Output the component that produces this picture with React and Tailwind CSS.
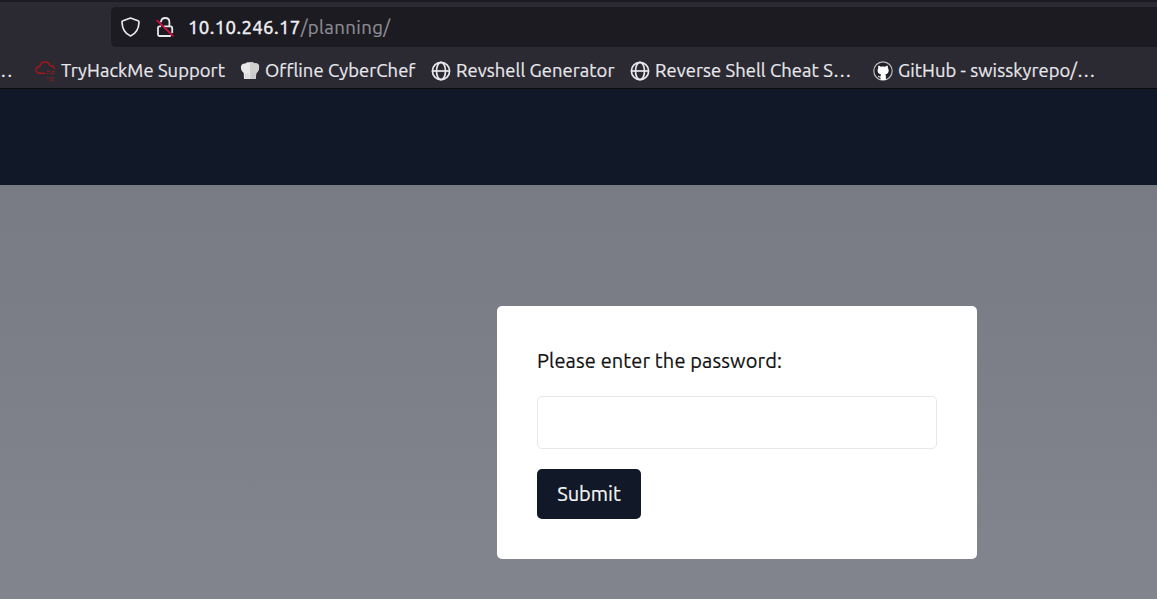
function GlobeIcon() {
  return (
    <svg className="size-5 shrink-0" viewBox="0 0 20 20" fill="none" stroke="#e8e8ec" strokeWidth="1.700">
      <circle cx="10" cy="10" r="8.600" />
      <ellipse cx="10" cy="10" rx="4.500" ry="8.600" />
      <path d="M1.300 10h17.400" />
    </svg>
  );
}

function CloudIcon() {
  return (
    <svg className="h-5 w-[21px] shrink-0" viewBox="0 0 21 20" fill="none" stroke="#a3161c" strokeWidth="1.500">
      <path d="M10 12.200H5.200C2.600 12.200 1 10.800 1 8.800 1 6.800 2.700 5.600 4.900 5.600 5.300 2.800 7.400 1.100 10 1.100c2.400 0 4.200 1.300 4.800 3.500 2.700-.1 4.300 1.200 4.500 3.400" />
      <path d="M12 10.300h3M17 10.300h2.700M11.500 12.300h2M15 12.300h4.500M11.500 16.800h2.500M15.500 16.800h3M14.500 19.200h4.500" strokeWidth="1.300" opacity=".75" />
    </svg>
  );
}

function ChefIcon() {
  return (
    <svg className="size-5 shrink-0" viewBox="0 0 20 20">
      <path d="M4 18 3.700 12C1.600 10.500 .6 8 1 5.500 1.300 3.200 3 2.200 5.300 2.400 6.500 1.200 8.500 1 10 1.300c1.600-.3 3.500 0 4.700 1.100C17 2 19 3.200 19.100 5.500c.2 2.500-.8 5-2.800 6.500L15.700 18Z" fill="#e9e9e9" />
      <path d="M10 1.300c1.600-.3 3.500 0 4.700 1.100C17 2 19 3.200 19.100 5.500c.2 2.500-.8 5-2.800 6.500L15.700 18H10Z" fill="#cfcfcf" />
      <path d="M5.800 12.500v5M8 12.500v5M12.300 12.500v5M14.300 12.500v5" stroke="#bdbdbd" strokeWidth=".6" />
    </svg>
  );
}

function GitHubIcon() {
  return (
    <svg className="size-5 shrink-0" viewBox="0 0 20 20">
      <circle cx="10" cy="10" r="9.200" fill="#202027" stroke="#b9b9be" strokeWidth="1.200" />
      <path d="M5.300 4.800c1 0 2 .5 2.700 1 1.300-.3 2.700-.3 4 0 .7-.5 1.700-1 2.700-1 .3.800.3 1.500.1 2.200.6.700.9 1.500.9 2.400 0 2.500-1.500 3.600-3.400 3.900.4.400.6 1 .6 1.600V19H7.500v-2.600c-1.600.2-2.400-.5-2.700-1.600l1 .1c.5.500 1 .6 1.700.5 0-.8.200-1.500.6-2-1.900-.3-3.500-1.400-3.500-4 0-.9.300-1.700.7-2.400-.2-.7-.2-1.400 0-2.200Z" fill="#fff" />
    </svg>
  );
}

function ShieldIcon() {
  return (
    <svg className="h-5 w-[19px] shrink-0" viewBox="0 0 19 20" fill="none" stroke="#e8e8ec" strokeWidth="1.700" strokeLinejoin="round">
      <path d="M9.500 1 17 3.700c.7.300 1.100.8 1 1.500-.2 6.300-3 11.300-8.500 13.800C4 16.500 1.200 11.500 1 5.200.9 4.500 1.300 4 2 3.700Z" />
    </svg>
  );
}

function InsecureLockIcon() {
  return (
    <svg className="h-5 w-[18px] shrink-0" viewBox="0 0 18 20" fill="none">
      <path d="M5 5.300C5.100 2.700 6.700 1 9.200 1s4.200 1.700 4.200 4.200V9M8 9.300h6.500c1 0 1.700.7 1.700 1.700v5M14.800 19H3.700c-1 0-1.700-.7-1.700-1.700V11c0-1 .7-1.700 1.700-1.700H5" stroke="#e8e8ec" strokeWidth="1.800" />
      <path d="m.8 3.200 16.400 16" stroke="#d9103f" strokeWidth="1.700" />
    </svg>
  );
}

function Bookmark({ icon, label, width }) {
  return (
    <a className={`flex shrink-0 items-center ${width}`}>
      {icon}
      <span className="ml-[5px] whitespace-nowrap pb-0.5">{label}</span>
    </a>
  );
}

export default function App() {
  return (
    <div className="flex h-[599px] w-full flex-col overflow-hidden font-['Ubuntu','Noto_Sans',sans-serif]">
      <div className="h-[89px] shrink-0 border-t-2 border-b border-t-[#1c1b22] border-b-[#0c0c0d] bg-[#2b2a33] pt-[5px]">
        <div className="ml-[111px] flex h-10 items-center rounded-l-[5px] bg-[#1c1b22] pl-[10px]">
          <ShieldIcon />
          <span className="ml-4 flex"><InsecureLockIcon /></span>
          <div className="ml-[14px] whitespace-nowrap pt-px text-[18.600px] leading-6 tracking-[0.380px] text-[#8f8e95] [-webkit-text-stroke:0.2px]">
            <span className="text-[#f0f0f4] [-webkit-text-stroke:0.5px]">10.10.246.17</span>/planning/
          </div>
        </div>
        <div className="flex h-[41px] items-center pt-[6px] text-[18.400px] leading-6 tracking-[0.060px] text-[#e8e8ec] [-webkit-text-stroke:0.2px]">
          <span className="w-[35px] shrink-0 pb-0.5 pl-px tracking-[2px]">..</span>
          <Bookmark icon={<CloudIcon />} label="TryHackMe Support" width="w-[205px]" />
          <Bookmark icon={<ChefIcon />} label="Offline CyberChef" width="w-[191px]" />
          <Bookmark icon={<GlobeIcon />} label="Revshell Generator" width="w-[199px]" />
          <Bookmark icon={<GlobeIcon />} label="Reverse Shell Cheat S…" width="w-[243px]" />
          <Bookmark icon={<GitHubIcon />} label="GitHub - swisskyrepo/…" width="w-[225px]" />
        </div>
      </div>
      <header className="h-[95.500px] shrink-0 bg-[#111827]" />
      <main className="flex-1 bg-linear-to-b from-[#787b84] to-[#82858e] pt-[121.500px]">
        <form className="ml-[497px] flex h-[253px] w-[480px] flex-col items-start rounded-[5px] bg-white px-10 pt-10 text-[20px] leading-[30px] text-[#111] [-webkit-text-stroke:0.2px]">
          <label htmlFor="password" className="whitespace-nowrap tracking-[0.120px]">Please enter the password:</label>
          <input id="password" type="password" className="mt-5 h-[52.500px] w-full shrink-0 rounded-[5px] border border-[#e5e7eb] px-5" />
          <button type="button" className="mt-5 flex h-[50px] w-[104px] shrink-0 items-center justify-center rounded-[5px] bg-[#111827] text-[#f3f4f6]">Submit</button>
        </form>
      </main>
    </div>
  );
}
